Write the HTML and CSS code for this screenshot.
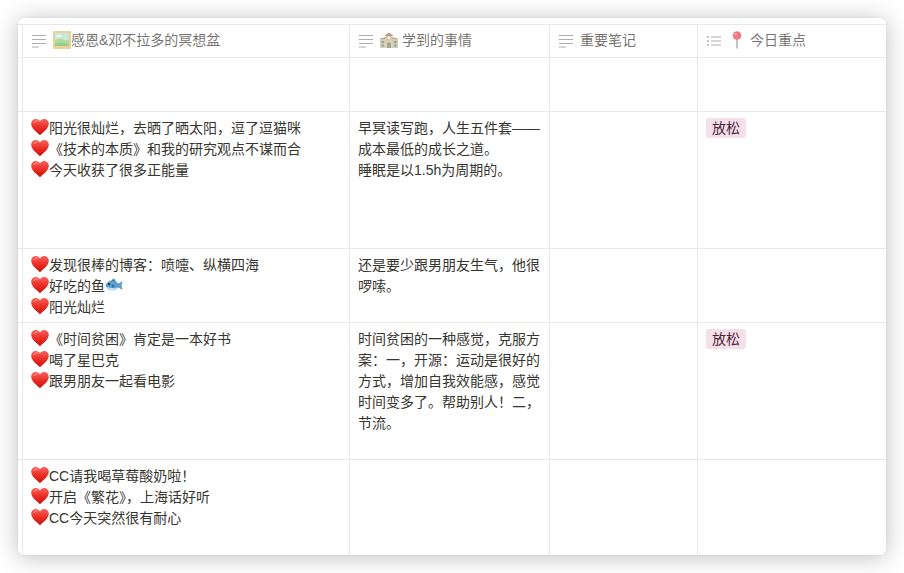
FILE: index.html
```html
<!DOCTYPE html>
<html lang="zh-CN">
<head>
<meta charset="utf-8">
<title>冥想盆</title>
<link rel="stylesheet" href="styles.css">
</head>
<body>
<svg class="sprite" aria-hidden="true">
  <defs>
    <linearGradient id="heartFill" x1="0" y1="0" x2="0" y2="1">
      <stop offset="0" stop-color="#f8625a"/>
      <stop offset="0.55" stop-color="#ea2a22"/>
      <stop offset="1" stop-color="#c8120e"/>
    </linearGradient>
    <symbol id="heart" viewBox="0 0 18 18">
      <path d="M9 17.2C6.6 14.9.2 10.8.2 5.8.2 3 2.400 1 5 1c1.800 0 3.200 1 4 2.500C9.800 2 11.200 1 13 1c2.600 0 4.800 2 4.800 4.800 0 5-6.400 9.100-8.800 11.400z" fill="url(#heartFill)"/>
      <path d="M3 4.600C3.600 3.300 5 2.700 6.200 3.100" fill="none" stroke="#ffb3ad" stroke-width="1" stroke-linecap="round"/>
    </symbol>
    <symbol id="lines" viewBox="0 0 14 14">
      <path d="M0 1.500h14M0 5.500h14M0 9.500h14M0 13h7" stroke="#37352f" stroke-opacity=".4" stroke-width="1" fill="none"/>
    </symbol>
    <symbol id="list" viewBox="0 0 14 14">
      <path d="M4 3h10M4 7h10M4 11h10" stroke="#37352f" stroke-opacity=".4" stroke-width="1" fill="none"/>
      <path d="M0 3h2M0 7h2M0 11h2" stroke="#37352f" stroke-opacity=".4" stroke-width="1.400" fill="none"/>
    </symbol>
    <symbol id="picture" viewBox="0 0 18 18">
      <rect x="0" y="0" width="18" height="18" rx="1" fill="#e4c77e"/>
      <rect x="2" y="2" width="14" height="13" fill="#bfe3d2"/>
      <path d="M2 10c3-3 6-3 8-1.500s4 1 6-.5v7H2z" fill="#9ed48a"/>
      <path d="M2 13c4-2 9-2 14 0v2H2z" fill="#7cc377"/>
      <ellipse cx="6" cy="5" rx="2.500" ry="1.200" fill="#fff" opacity=".8"/>
    </symbol>
    <symbol id="school" viewBox="0 0 18 18">
      <rect x="0" y="7" width="18" height="10" fill="#c9c2aa"/>
      <rect x="5.500" y="3.500" width="7" height="13.500" fill="#d8c7a0"/>
      <path d="M4.500 5 9 1.500 13.500 5z" fill="#b27e6a"/>
      <path d="M0 8l5.500-2v2zM18 8l-5.500-2v2z" fill="#b27e6a"/>
      <circle cx="9" cy="7" r="2" fill="#f4f1e6" stroke="#8f8a78" stroke-width=".5"/>
      <rect x="7.200" y="11.500" width="3.600" height="5.500" fill="#7f8c80"/>
      <path d="M1.500 10h2.500v2H1.500zM1.500 13.500h2.500v2H1.500zM14 10h2.500v2H14zM14 13.500h2.500v2H14z" fill="#7f8c80"/>
    </symbol>
    <symbol id="pin" viewBox="0 0 18 18">
      <path d="M9 7v10" stroke="#a9a9a9" stroke-width="1.400" stroke-linecap="round"/>
      <circle cx="9" cy="4.500" r="4.300" fill="#ec7a80"/>
      <circle cx="7.600" cy="3.100" r="1" fill="#f8bcbf"/>
    </symbol>
    <symbol id="fish" viewBox="0 0 18 18">
      <path d="M.5 9.500C2.500 3.800 9 2.800 13.500 7.500L17.500 5l-1 4.500 1 4.500-4-2.500C9 16 2.500 15 .5 9.500z" fill="#5b9fd0"/>
      <path d="M1.800 11c3 4 8 3.800 11.200 .6C9 12.500 5 12.300 1.800 11z" fill="#d5e6ef"/>
      <path d="M6 4.800 9 2.500l2 3.300z" fill="#3c7fb4"/>
      <path d="M7 8.200l3 1.800L7 11.800z" fill="#2f6f9f"/>
      <circle cx="4" cy="8.200" r="1.100" fill="#17324a"/>
    </symbol>
  </defs>
</svg>

<main class="window">
  <div class="row row-head">
    <div class="cell head">
      <svg class="ico"><use href="#lines"/></svg>
      <svg class="emoji faded"><use href="#picture"/></svg><span>感恩&amp;邓不拉多的冥想盆</span>
    </div>
    <div class="cell head">
      <svg class="ico"><use href="#lines"/></svg>
      <svg class="emoji faded"><use href="#school"/></svg><span class="after-emoji">学到的事情</span>
    </div>
    <div class="cell head">
      <svg class="ico"><use href="#lines"/></svg>
      <span>重要笔记</span>
    </div>
    <div class="cell head">
      <svg class="ico"><use href="#list"/></svg>
      <svg class="emoji"><use href="#pin"/></svg><span class="after-emoji">今日重点</span>
    </div>
  </div>

  <div class="row row-empty">
    <div class="cell"></div><div class="cell"></div><div class="cell"></div><div class="cell"></div>
  </div>

  <div class="row row-tall">
    <div class="cell">
      <p><svg class="heart"><use href="#heart"/></svg>阳光很灿烂，去晒了晒太阳，逗了逗猫咪</p>
      <p><svg class="heart"><use href="#heart"/></svg>《技术的本质》和我的研究观点不谋而合</p>
      <p><svg class="heart"><use href="#heart"/></svg>今天收获了很多正能量</p>
    </div>
    <div class="cell">
      <p>早冥读写跑，人生五件套——成本最低的成长之道。</p>
      <p>睡眠是以1.5h为周期的。</p>
    </div>
    <div class="cell"></div>
    <div class="cell"><span class="tag">放松</span></div>
  </div>

  <div class="row row-mid">
    <div class="cell">
      <p><svg class="heart"><use href="#heart"/></svg>发现很棒的博客：喷嚏、纵横四海</p>
      <p><svg class="heart"><use href="#heart"/></svg>好吃的鱼<svg class="heart"><use href="#fish"/></svg></p>
      <p><svg class="heart"><use href="#heart"/></svg>阳光灿烂</p>
    </div>
    <div class="cell">
      <p>还是要少跟男朋友生气，他很啰嗦。</p>
    </div>
    <div class="cell"></div>
    <div class="cell"></div>
  </div>

  <div class="row row-tall">
    <div class="cell">
      <p><svg class="heart"><use href="#heart"/></svg>《时间贫困》肯定是一本好书</p>
      <p><svg class="heart"><use href="#heart"/></svg>喝了星巴克</p>
      <p><svg class="heart"><use href="#heart"/></svg>跟男朋友一起看电影</p>
    </div>
    <div class="cell">
      <p>时间贫困的一种感觉，克服方案：一，开源：运动是很好的方式，增加自我效能感，感觉时间变多了。帮助别人！二，节流。</p>
    </div>
    <div class="cell"></div>
    <div class="cell"><span class="tag">放松</span></div>
  </div>

  <div class="row row-last">
    <div class="cell">
      <p><svg class="heart"><use href="#heart"/></svg>CC请我喝草莓酸奶啦！</p>
      <p><svg class="heart"><use href="#heart"/></svg>开启《繁花》，上海话好听</p>
      <p><svg class="heart"><use href="#heart"/></svg>CC今天突然很有耐心</p>
    </div>
    <div class="cell"></div>
    <div class="cell"></div>
    <div class="cell"></div>
  </div>
</main>
</body>
</html>
```
FILE: styles.css
```css
* {
  box-sizing: border-box;
}

html,
body {
  height: 100%;
  margin: 0;
  background: #fff;
  overflow: hidden;
}

body {
  padding: 18px;
  font-family: "Liberation Sans", "Noto Sans CJK SC", sans-serif;
  font-size: 14px;
  line-height: 21px;
  color: #37352f;
}

.sprite {
  position: absolute;
  width: 0;
  height: 0;
}

.window {
  display: flex;
  flex-direction: column;
  width: 868px;
  height: 537px;
  padding-top: 6px;
  background: #fff;
  border-radius: 6px;
  box-shadow: 0 2px 24px rgba(0, 0, 0, 0.26), 0 0 2px rgba(0, 0, 0, 0.08);
  overflow: hidden;
}

.row {
  display: grid;
  grid-template-columns: 327px 200px 148px 189px;
  padding-left: 4px;
  border-top: 1px solid #e9e9e7;
}

.row-head {
  height: 33px;
}

.row-empty {
  height: 54px;
}

.row-tall {
  height: 137px;
}

.row-mid {
  height: 74px;
}

.row-last {
  flex: 1;
}

.cell {
  padding: 6px 8px;
  border-left: 1px solid #e9e9e7;
}

.cell p {
  margin: 0;
}

.head {
  display: flex;
  align-items: center;
  padding: 0 0 2px 9px;
  color: rgba(55, 53, 47, 0.7);
}

.ico {
  flex: none;
  width: 14px;
  height: 14px;
  margin: 2px 7px 0 0;
}

.emoji {
  flex: none;
  width: 18px;
  height: 18px;
}

.faded {
  opacity: 0.8;
}

.after-emoji {
  margin-left: 4px;
}

.heart {
  width: 18px;
  height: 18px;
  vertical-align: -3px;
}

.tag {
  display: inline-block;
  height: 20px;
  padding: 0 6px;
  border-radius: 3px;
  background: #f5e0e9;
  line-height: 20px;
  color: #4c2337;
}
```
